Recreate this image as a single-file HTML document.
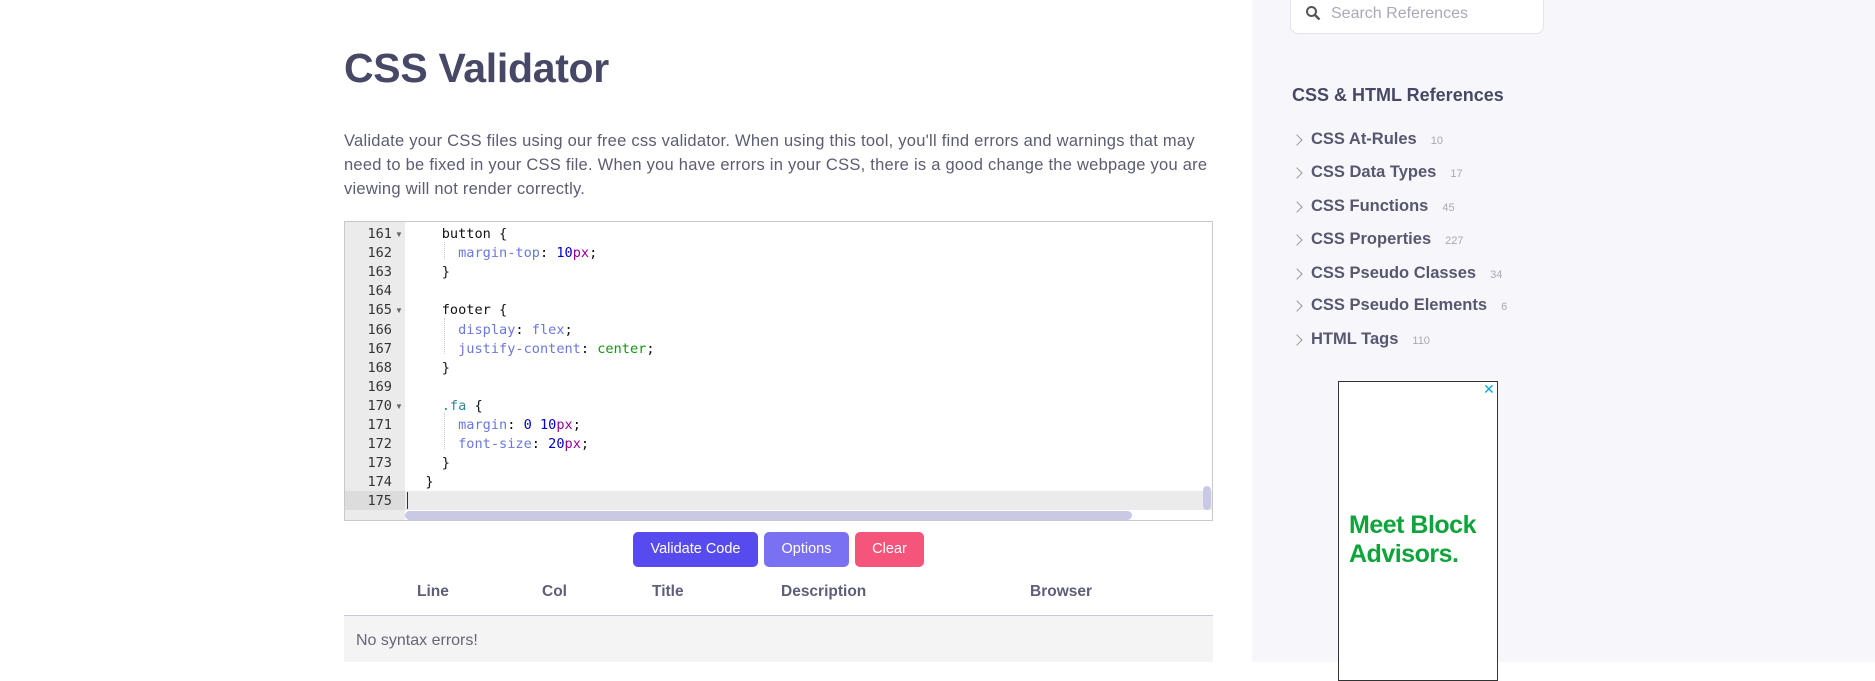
<!DOCTYPE html>
<html><head><meta charset="utf-8"><style>
*{margin:0;padding:0;box-sizing:border-box}
body{width:1875px;height:662px;overflow:hidden;background:#fff;font-family:"Liberation Sans",sans-serif;position:relative}
.side{position:absolute;left:1252px;top:0;width:623px;height:662px;background:#f7f7fb}
h1{position:absolute;left:344px;top:45px;font-size:41px;font-weight:700;color:#464866;letter-spacing:-0.3px}
.p{position:absolute;left:344px;top:129px;width:880px;font-size:16.5px;line-height:24px;color:#5c5c72;letter-spacing:0.25px}
.ed{position:absolute;left:344px;top:221px;width:869px;height:300px;border:1px solid #c8c8c8;background:#fff;overflow:hidden}
.gut{position:absolute;left:0;top:0;width:60px;height:100%;background:#ebebeb}
.ln{position:absolute;left:0;width:48px;text-align:right;font-family:"DejaVu Sans Mono",monospace;font-size:13.6px;color:#333}
.cd{position:absolute;font-family:"DejaVu Sans Mono",monospace;font-size:13.6px;color:#111;white-space:pre}
.pr{color:#6a78e0}.nu{color:#0000cc}.un{color:#990099}.kw{color:#119911}.cl{color:#2a8a9a}
.fold{font-size:8px;color:#666;position:absolute;left:50px}
.btn{position:absolute;top:532px;height:35px;border-radius:5px;color:#fff;font-size:14.5px;line-height:35px;text-align:center}
.th{position:absolute;top:582px;font-size:15.5px;font-weight:700;color:#5e5e7a}
.li{position:absolute;left:1311px;font-size:16.5px;font-weight:700;color:#575770}
.li small{font-size:11px;color:#a8a8b8;font-weight:400;margin-left:14px}
.ch{position:absolute;left:1293px;width:8px;height:8px;border-right:1.5px solid #999;border-top:1.5px solid #999;transform:rotate(45deg)}
</style></head><body>
<div class="side"></div>
<div style="position:absolute;left:1290px;top:-10px;width:254px;height:44px;background:#fff;border:1px solid #e2e2ea;border-radius:8px"></div>
<svg style="position:absolute;left:1305px;top:5px" width="16" height="16" viewBox="0 0 16 16"><circle cx="6.5" cy="6.5" r="4.5" fill="none" stroke="#555" stroke-width="2"/><path d="M10 10l4.5 4.5" stroke="#555" stroke-width="2.4"/></svg>
<div style="position:absolute;left:1331px;top:5px;font-size:16px;color:#a9a9b8">Search References</div>
<div style="position:absolute;left:1292px;top:85px;font-size:18px;font-weight:700;color:#464866">CSS &amp; HTML References</div>

<h1>CSS Validator</h1>
<div class="p">Validate your CSS files using our free css validator. When using this tool, you'll find errors and warnings that may need to be fixed in your CSS file. When you have errors in your CSS, there is a good change the webpage you are viewing will not render correctly.</div>

<div class="ed">
<div class="gut"></div>
<div style="position:absolute;left:0;top:269px;width:60px;height:19px;background:#dcdcdc"></div>
<div style="position:absolute;left:60px;top:269px;width:808px;height:19px;background:#ebebeb"></div>
<div style="position:absolute;left:62px;top:270px;width:1px;height:17px;background:#333"></div>
<div style="position:absolute;left:60px;top:289px;width:727px;height:9px;border-radius:5px;background:#c9c9e6"></div>
<div style="position:absolute;left:858px;top:264px;width:8px;height:24px;border-radius:4px;background:#c9c9e6"></div>
<div style="position:absolute;left:99px;top:20px;border-left:1px dotted #ccc;height:17px"></div>
<div style="position:absolute;left:99px;top:96px;border-left:1px dotted #ccc;height:36px"></div>
<div style="position:absolute;left:99px;top:191px;border-left:1px dotted #ccc;height:36px"></div>
</div>
<div id="lines"></div>
<script>
var L=[["161","    button {",1],["162","      <span class=pr>margin-top</span>: <span class=nu>10</span><span class=un>px</span>;"],["163","    }"],["164",""],["165","    footer {",1],["166","      <span class=pr>display</span>: <span class=pr>flex</span>;"],["167","      <span class=pr>justify-content</span>: <span class=kw>center</span>;"],["168","    }"],["169",""],["170","    <span class=cl>.fa</span> {",1],["171","      <span class=pr>margin</span>: <span class=nu>0 10</span><span class=un>px</span>;"],["172","      <span class=pr>font-size</span>: <span class=nu>20</span><span class=un>px</span>;"],["173","    }"],["174","  }"],["175",""]];
var h="";for(var i=0;i<L.length;i++){var t=226+i*19.1;h+='<div class=ln style="left:344px;top:'+t+'px">'+L[i][0]+'</div>';if(L[i][2])h+='<div class="fold" style="left:395px;top:'+(t+4)+'px">▼</div>';h+='<div class=cd style="left:409px;top:'+t+'px">'+L[i][1]+'</div>';}
document.getElementById('lines').innerHTML=h;
</script>

<div class="btn" style="left:633px;width:125px;background:#574bef">Validate Code</div>
<div class="btn" style="left:764px;width:85px;background:#7a70f2">Options</div>
<div class="btn" style="left:855px;width:69px;background:#f6557b">Clear</div>

<div class="th" style="left:417px;top:583px">Line</div>
<div class="th" style="left:542px;top:583px">Col</div>
<div class="th" style="left:652px;top:583px">Title</div>
<div class="th" style="left:781px;top:583px">Description</div>
<div class="th" style="left:1030px;top:583px">Browser</div>
<div style="position:absolute;left:344px;top:615px;width:869px;height:47px;background:#f4f4f4;border-top:1.5px solid #c6c6dc"></div>
<div style="position:absolute;left:356px;top:632px;font-size:16px;color:#66667a">No syntax errors!</div>

<div class="ch" style="top:136px"></div><div class="li" style="top:130px">CSS At-Rules<small>10</small></div>
<div class="ch" style="top:169px"></div><div class="li" style="top:163px">CSS Data Types<small>17</small></div>
<div class="ch" style="top:203px"></div><div class="li" style="top:197px">CSS Functions<small>45</small></div>
<div class="ch" style="top:236px"></div><div class="li" style="top:230px">CSS Properties<small>227</small></div>
<div class="ch" style="top:270px"></div><div class="li" style="top:264px">CSS Pseudo Classes<small>34</small></div>
<div class="ch" style="top:302px"></div><div class="li" style="top:296px">CSS Pseudo Elements<small>6</small></div>
<div class="ch" style="top:336px"></div><div class="li" style="top:330px">HTML Tags<small>110</small></div>

<div style="position:absolute;left:1338px;top:381px;width:160px;height:300px;background:#fff;border:1px solid #333"></div>
<div style="position:absolute;left:1483px;top:381px;font-size:14px;color:#00aadd">✕</div>
<div style="position:absolute;left:1349px;top:511px;font-size:25px;line-height:29px;font-weight:700;color:#0fa33c;letter-spacing:-0.5px">Meet Block<br>Advisors.</div>
</body></html>
